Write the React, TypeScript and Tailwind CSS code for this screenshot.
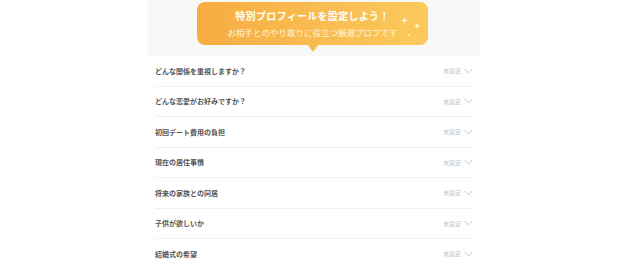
import React from "react";

const questions = [
  "どんな関係を重視しますか？",
  "どんな恋愛がお好みですか？",
  "初回デート費用の負担",
  "現在の居住事情",
  "将来の家族との同居",
  "子供が欲しいか",
  "結婚式の希望",
];

const Sparkle: React.FC<{ size: number; className?: string }> = ({ size, className }) => (
  <svg width={size} height={size} viewBox="0 0 10 10" className={className}>
    <path d="M5 0 Q5.6 4.4 10 5 Q5.6 5.6 5 10 Q4.4 5.6 0 5 Q4.4 4.4 5 0Z" fill="#fff6c8" />
  </svg>
);

const App: React.FC = () => {
  return (
    <div
      className="w-[640px] h-[264px] bg-white overflow-hidden"
      style={{ fontFamily: '"Noto Sans CJK JP", "Noto Sans", sans-serif' }}
    >
      <div className="ml-[148px] w-[332px]">
        {/* ヘッダー */}
        <div className="h-[56px] bg-[#f8f8f8] pt-[2px] pl-[49px]">
          <div className="relative w-[231px] h-[43px] rounded-[8px] bg-gradient-to-r from-[#f6ac42] to-[#fbca5c] flex flex-col items-center justify-center">
            <div className="text-white font-bold text-[10px] leading-[14px] tracking-[0.3px]">
              特別プロフィールを設定しよう！
            </div>
            <div className="text-[#fff4dc] text-[8.5px] leading-[12px] mt-[3px]">
              お相手とのやり取りに役立つ厳選プロフです
            </div>
            <Sparkle size={7} className="absolute left-[204px] top-[15px]" />
            <Sparkle size={6} className="absolute left-[217px] top-[21px]" />
            <div className="absolute left-[211px] top-[32px] w-[2px] h-[2px] rounded-full bg-[#fff3c0]" />
            <div className="absolute left-1/2 -translate-x-1/2 top-[42px] w-0 h-0 border-l-[6px] border-r-[6px] border-t-[8px] border-l-transparent border-r-transparent border-t-[#fbbc4f]" />
          </div>
        </div>

        {/* 質問リスト */}
        <div className="px-[7px]">
          {questions.map((q) => (
            <div
              key={q}
              className="h-[30.5px] flex items-center justify-between border-b border-[#f0f0f0]"
            >
              <span className="text-[7px] font-bold text-[#555]">{q}</span>
              <span className="flex items-center gap-[3px] text-[6px] text-[#c4c4c4]">
                未設定
                <svg width="9" height="6" viewBox="0 0 9 6" fill="none">
                  <path d="M0.5 0.8 L4.5 4.8 L8.5 0.8" stroke="#c4c4c4" strokeWidth="1" />
                </svg>
              </span>
            </div>
          ))}
        </div>
      </div>
    </div>
  );
};

export default App;
